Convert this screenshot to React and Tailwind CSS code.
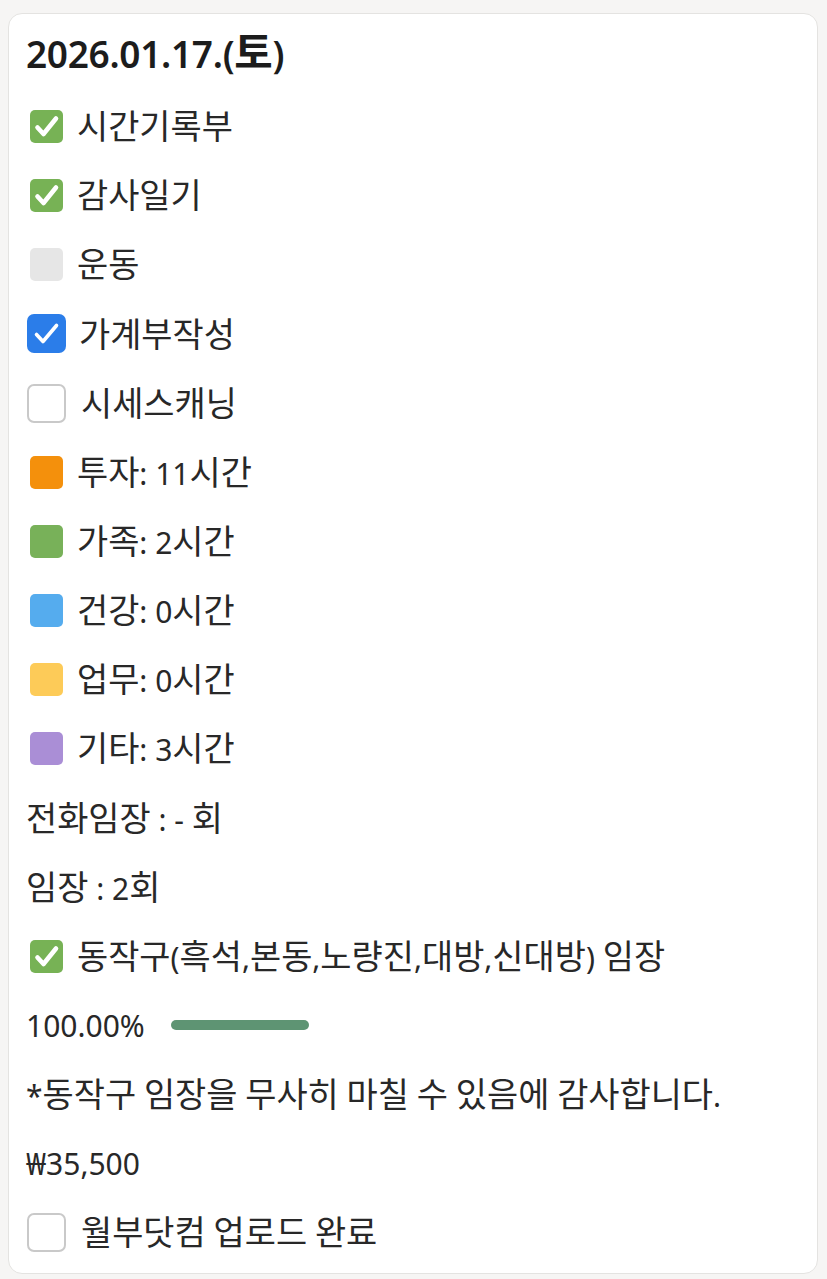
import React from 'react';

const font = { fontFamily: '"Noto Sans", "Noto Sans CJK KR", sans-serif' };

// Hangul glyphs in the screenshot run larger than the latin ones, so size them apart
function K({ text }) {
  return text.split(/([가-힣]+)/).map((part, i) =>
    /[가-힣]/.test(part) ? (
      <span key={i} className="text-[1.13em]">{part}</span>
    ) : (
      part
    )
  );
}

function GreenCheck() {
  return (
    <div className="w-[33px] h-[33px] rounded-[5px] bg-[#77b255] shrink-0 ml-[4px]">
      <svg viewBox="0 0 33 33" className="w-[33px] h-[33px]" fill="none" stroke="white" strokeWidth="4.6" strokeLinecap="round" strokeLinejoin="round">
        <path d="M7.5 17.5l6 6.5L26 8.5" />
      </svg>
    </div>
  );
}

function BlueCheck() {
  return (
    <div className="w-[39px] h-[39px] rounded-[7px] bg-[#2b7de9] shrink-0 ml-[1px]">
      <svg viewBox="0 0 39 39" className="w-[39px] h-[39px]" fill="none" stroke="white" strokeWidth="3.6" strokeLinecap="round" strokeLinejoin="round">
        <path d="M9.5 20.5l6.5 7L29.5 11.5" />
      </svg>
    </div>
  );
}

function Square({ color }) {
  return <div className={`w-[33px] h-[33px] rounded-[5px] shrink-0 ml-[4px] ${color}`} />;
}

function EmptyBox() {
  return <div className="w-[39px] h-[39px] rounded-[7px] border-2 border-[#c9c9c9] bg-white shrink-0 ml-[1px]" />;
}

function Row({ icon, text, gap = 'gap-[14px]' }) {
  return (
    <div className={`h-[69.15px] flex items-center ${gap}`}>
      {icon}
      <span>
        <K text={text} />
      </span>
    </div>
  );
}

const hours = [
  { label: '투자: 11시간', color: 'bg-[#f4900c]' },
  { label: '가족: 2시간', color: 'bg-[#78b159]' },
  { label: '건강: 0시간', color: 'bg-[#55acee]' },
  { label: '업무: 0시간', color: 'bg-[#fdcb58]' },
  { label: '기타: 3시간', color: 'bg-[#aa8ed6]' },
];

export default function App() {
  return (
    <div className="min-h-[1279px] bg-[#f6f5f4] pt-[13px] pl-[8px] pr-[9px]" style={font}>
      <div className="bg-white border border-[#e4e3e1] rounded-[14px] pl-[17px] pt-[16px] pb-[6px] text-[30px] text-[#282828]">
        <h1 className="h-[44px] flex items-center text-[37px] font-semibold text-[#1c1c1c] tracking-[-0.3px]">
          <span>
            <K text="2026.01.17.(토)" />
          </span>
        </h1>
        <div className="mt-[18px]">
          <Row icon={<GreenCheck />} text="시간기록부" />
          <Row icon={<GreenCheck />} text="감사일기" />
          <Row icon={<Square color="bg-[#e6e6e6]" />} text="운동" />
          <Row gap="gap-[13px]" icon={<BlueCheck />} text="가계부작성" />
          <Row gap="gap-[15px]" icon={<EmptyBox />} text="시세스캐닝" />
          {hours.map((h) => (
            <Row key={h.label} icon={<Square color={h.color} />} text={h.label} />
          ))}
          <Row text="전화임장 : - 회" />
          <Row text="임장 : 2회" />
          <Row icon={<GreenCheck />} text="동작구(흑석,본동,노량진,대방,신대방) 임장" />
          <div className="h-[69.15px] flex items-center gap-[26px]">
            <span>100.00%</span>
            <div className="w-[138px] h-[10px] rounded-full bg-[#5e9473]" />
          </div>
          <Row text="*동작구 임장을 무사히 마칠 수 있음에 감사합니다." />
          <Row text="₩35,500" />
          <Row gap="gap-[15px]" icon={<EmptyBox />} text="월부닷컴 업로드 완료" />
        </div>
      </div>
    </div>
  );
}
